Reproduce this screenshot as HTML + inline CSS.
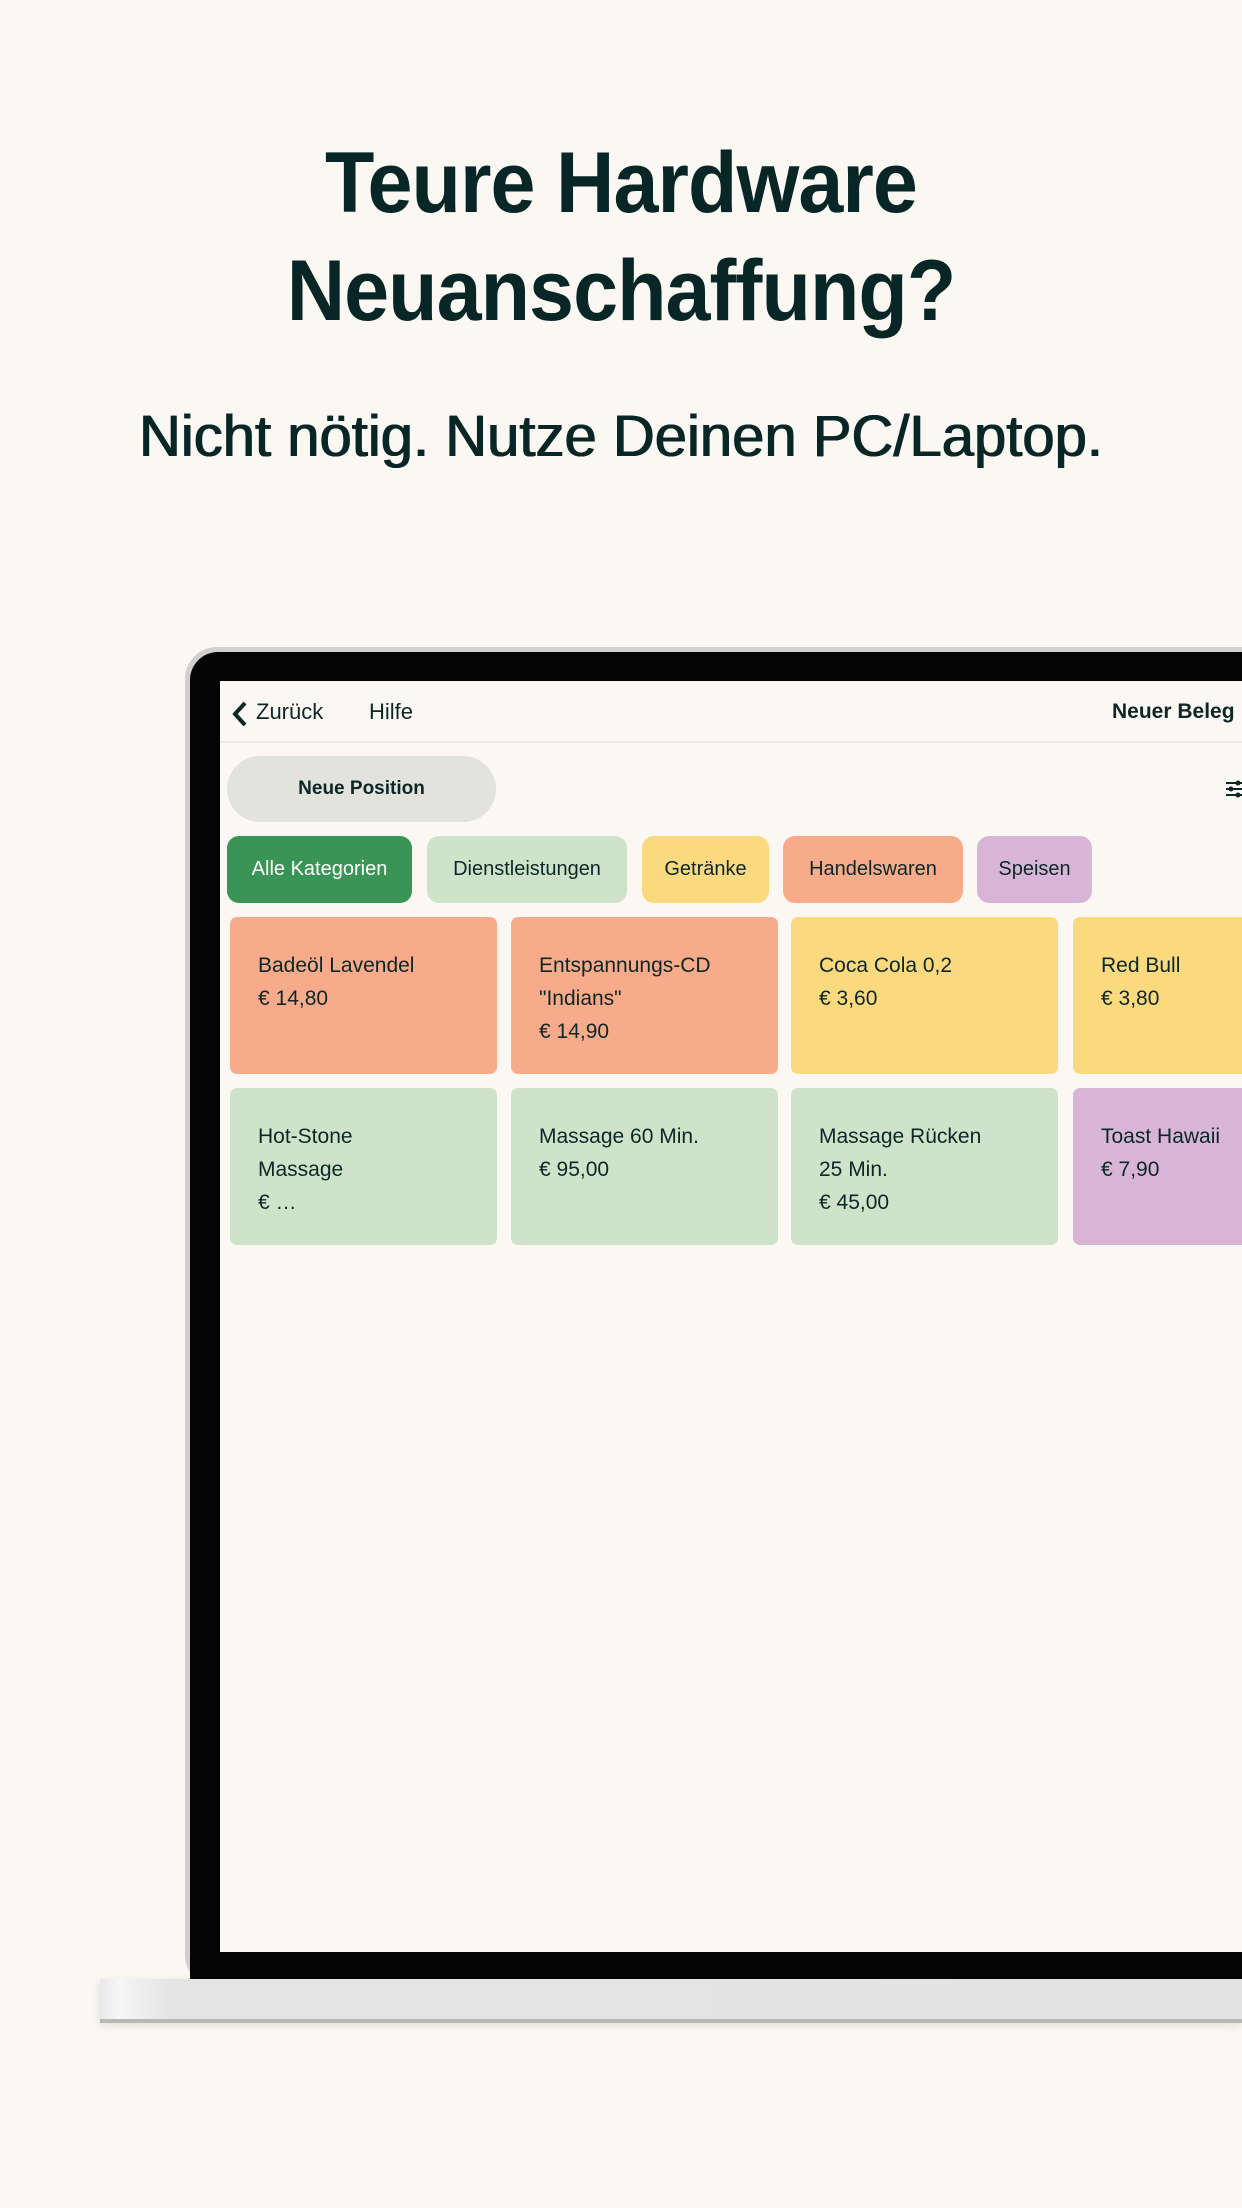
<!DOCTYPE html>
<html><head><meta charset="utf-8"><style>
*{margin:0;padding:0;box-sizing:border-box}
body{width:1242px;height:2208px;background:#fbf8f3;position:relative;overflow:hidden;font-family:"Liberation Sans",sans-serif;color:#0d2727}
.a{position:absolute}
h1{position:absolute;left:0;width:1242px;text-align:center;font-size:86px;font-weight:bold;line-height:1;letter-spacing:-1px;color:#082626;transform:scaleX(0.94)}
.sub{position:absolute;left:0;width:1242px;text-align:center;font-size:58px;top:403px;color:#082626;text-shadow:0.6px 0 0 #082626,-0.6px 0 0 #082626}
.chip{position:absolute;top:836px;height:67px;border-radius:12px;font-size:20px;line-height:67px;text-align:center}
.card{position:absolute;border-radius:7px;padding:32px 0 0 28px;font-size:21px;line-height:33px;width:267px;height:157px}
</style></head><body>
<h1 style="top:140px">Teure Hardware</h1>
<h1 style="top:248px">Neuanschaffung?</h1>
<div class="sub">Nicht nötig. Nutze Deinen PC/Laptop.</div>

<div class="a" style="left:185px;top:647px;width:1100px;height:1340px;border-radius:32px;background:#d0d0ce"></div>
<div class="a" style="left:190px;top:652px;width:1100px;height:1327px;border-radius:28px 0 0 0;background:#050505"></div>
<div class="a" style="left:220px;top:681px;width:1022px;height:1271px;background:#fbf8f3"></div>
<div class="a" style="left:100px;top:1979px;width:1142px;height:42px;background:linear-gradient(90deg,#e9e9e9 0,#f6f6f6 20px,#e4e4e4 70px,#e3e3e3 100%);box-shadow:0 4px 10px rgba(0,0,0,0.12)"></div>
<div class="a" style="left:100px;top:2019px;width:1142px;height:4px;background:#b8b8b5"></div>

<div class="a" style="left:220px;top:741px;width:1022px;height:2px;background:#ecebe6"></div>
<svg class="a" style="left:231px;top:700px" width="18" height="28" viewBox="0 0 18 28"><path d="M14 3 L4 14 L14 25" stroke="#0d2727" stroke-width="4" fill="none"/></svg>
<div class="a" style="left:256px;top:699px;font-size:22px">Zurück</div>
<div class="a" style="left:369px;top:699px;font-size:22px">Hilfe</div>
<div class="a" style="left:1112px;top:700px;font-size:21px;font-weight:bold">Neuer Beleg</div>

<div class="a" style="left:227px;top:756px;width:269px;height:66px;border-radius:33px;background:#e2e3de;text-align:center;line-height:66px;font-size:19px;font-weight:bold">Neue Position</div>
<svg class="a" style="left:1225px;top:780px" width="17" height="18"><g stroke="#0d2727" stroke-width="2"><line x1="1" y1="3" x2="17" y2="3"/><line x1="1" y1="9" x2="17" y2="9"/><line x1="1" y1="15" x2="17" y2="15"/></g><circle cx="13" cy="3" r="2.5" fill="#0d2727"/><circle cx="6" cy="9" r="2.5" fill="#0d2727"/><circle cx="13" cy="15" r="2.5" fill="#0d2727"/></svg>

<div class="chip" style="left:227px;width:185px;background:#3a9455;color:#fff">Alle Kategorien</div>
<div class="chip" style="left:427px;width:200px;background:#cfe3cb">Dienstleistungen</div>
<div class="chip" style="left:642px;width:127px;background:#fbd97f">Getränke</div>
<div class="chip" style="left:783px;width:180px;background:#f7ab8b">Handelswaren</div>
<div class="chip" style="left:977px;width:115px;background:#d8b5d6">Speisen</div>

<div class="card" style="left:230px;top:917px;background:#f7ab8b">Badeöl Lavendel<br>€ 14,80</div>
<div class="card" style="left:511px;top:917px;background:#f7ab8b">Entspannungs-CD<br>"Indians"<br>€ 14,90</div>
<div class="card" style="left:791px;top:917px;background:#fbd97f">Coca Cola 0,2<br>€ 3,60</div>
<div class="card" style="left:1073px;top:917px;background:#fbd97f">Red Bull<br>€ 3,80</div>
<div class="card" style="left:230px;top:1088px;background:#cfe3cb">Hot-Stone<br>Massage<br>€ …</div>
<div class="card" style="left:511px;top:1088px;background:#cfe3cb">Massage 60 Min.<br>€ 95,00</div>
<div class="card" style="left:791px;top:1088px;background:#cfe3cb">Massage Rücken<br>25 Min.<br>€ 45,00</div>
<div class="card" style="left:1073px;top:1088px;background:#d8b5d6;white-space:nowrap">Toast Hawaii<br>€ 7,90</div>
</body></html>
